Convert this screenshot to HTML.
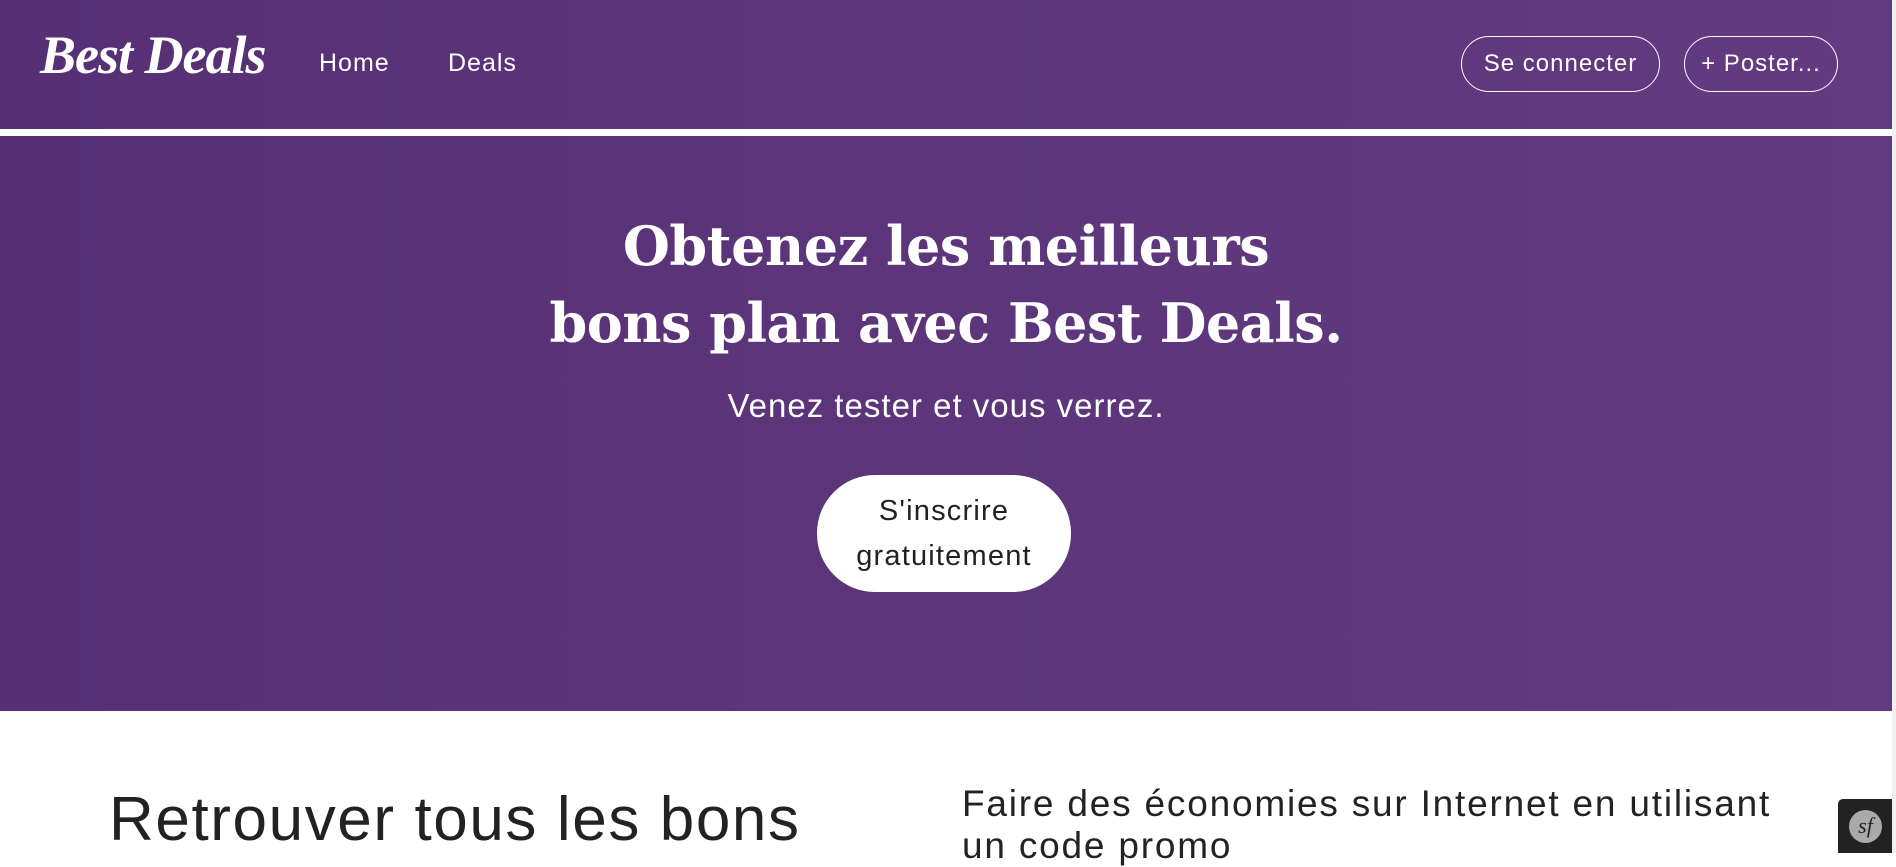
<!DOCTYPE html>
<html><head><meta charset="utf-8"><style>
*{margin:0;padding:0;box-sizing:border-box}
html,body{width:1896px;height:853px;overflow:hidden;background:#fff;font-family:"Liberation Sans",sans-serif}
.hdr{position:absolute;left:0;top:0;width:1892px;height:129px;background:linear-gradient(90deg,#562f75,#623b80)}
.stripe{position:absolute;left:0;top:129px;width:1892px;height:7px;background:#fff}
.hero{position:absolute;left:0;top:136px;width:1892px;height:575px;background:linear-gradient(90deg,#562f75,#623b80)}
.sb{position:absolute;right:0;top:0;width:4px;height:853px;background:#f0f0f0}
.logo{position:absolute;left:40px;top:24px;font-family:"Liberation Serif",serif;font-style:italic;font-weight:bold;font-size:54px;color:#fff;letter-spacing:-1px}
.nav{position:absolute;top:49px;font-size:25px;color:#fff;letter-spacing:1px}
.btn{position:absolute;top:36px;height:56px;border:1.5px solid #fff;border-radius:28px;color:#fff;font-size:24px;display:flex;align-items:center;justify-content:center;letter-spacing:1px}
h1{position:absolute;left:0;width:1892px;top:208px;text-align:center;font-family:"DejaVu Serif","Liberation Serif",serif;font-weight:bold;font-size:54px;line-height:77px;color:#fff;letter-spacing:-0.5px}
.sub{position:absolute;left:0;width:1892px;top:387px;text-align:center;color:#fff;font-size:33px;letter-spacing:1px}
.cta{position:absolute;left:817px;top:475px;width:254px;height:117px;background:#fff;border-radius:58px;color:#222;font-size:29px;line-height:45px;text-align:center;padding-top:14px;letter-spacing:1.2px}
.h2a{position:absolute;left:109px;top:784px;font-size:62px;color:#222;letter-spacing:1.6px}
.h2b{position:absolute;left:962px;top:783px;font-size:37px;line-height:42px;color:#222;width:920px;letter-spacing:1.8px}
.sf{position:absolute;left:1838px;top:799px;width:54px;height:54px;background:#222;border-radius:5px 0 0 0}
.sf div{position:absolute;left:11px;top:11px;width:33px;height:33px;border-radius:50%;background:#aaa;color:#222;font-family:"Liberation Serif",serif;font-style:italic;font-size:22px;text-align:center;line-height:31px}
</style></head><body>
<div class="hdr"></div><div class="stripe"></div><div class="hero"></div>
<div class="logo">Best Deals</div>
<div class="nav" style="left:319px">Home</div>
<div class="nav" style="left:448px">Deals</div>
<div class="btn" style="left:1461px;width:199px">Se connecter</div>
<div class="btn" style="left:1684px;width:154px">+ Poster...</div>
<h1>Obtenez les meilleurs<br>bons plan avec Best Deals.</h1>
<div class="sub">Venez tester et vous verrez.</div>
<div class="cta">S'inscrire<br>gratuitement</div>
<div class="h2a">Retrouver tous les bons</div>
<div class="h2b">Faire des économies sur Internet en utilisant<br>un code promo</div>
<div class="sf"><div>sf</div></div>
<div class="sb"></div>
</body></html>
